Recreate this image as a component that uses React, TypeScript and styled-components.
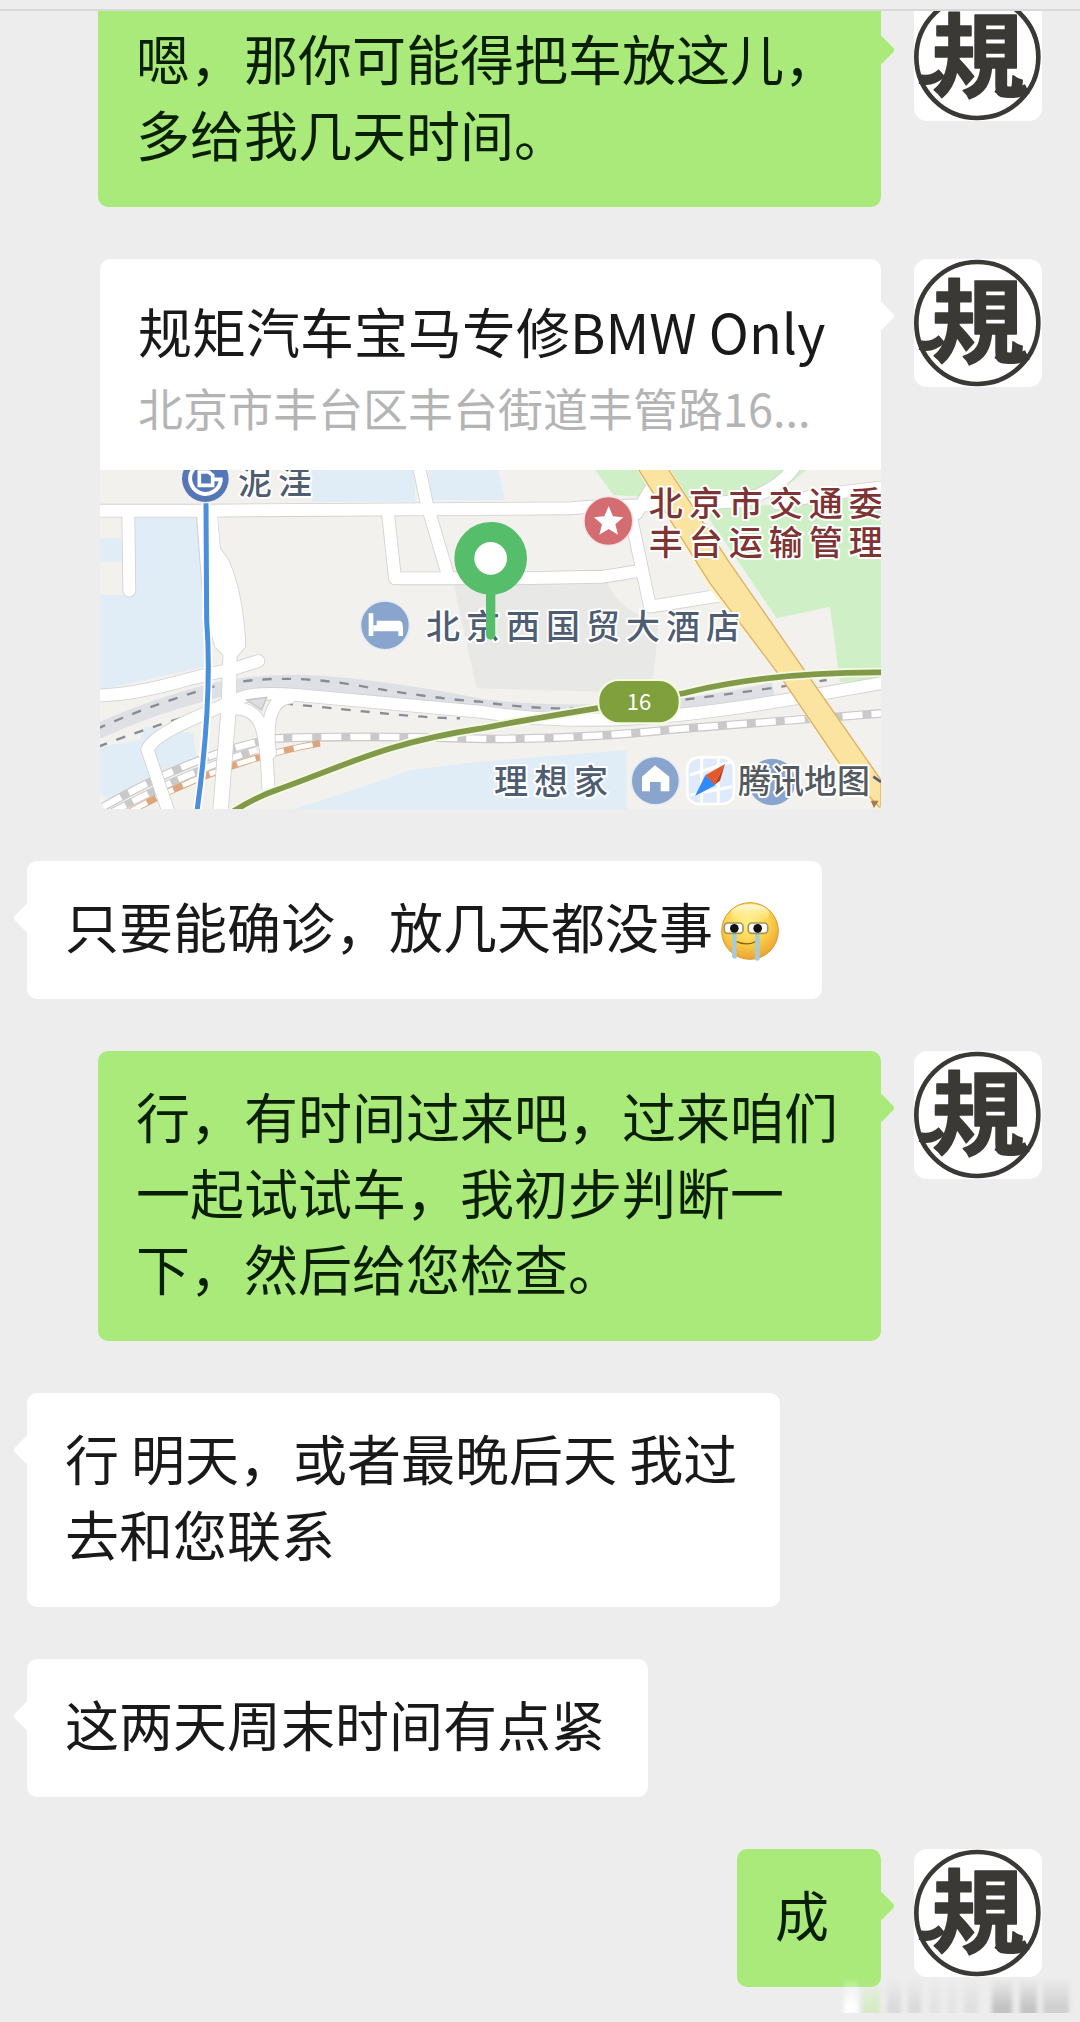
import React from "react";
import styled, { createGlobalStyle, css } from "styled-components";

const GREEN = "#a9ea7a";
const WHITE = "#ffffff";
const PAGE = "#ededed";

const GlobalStyle = createGlobalStyle`
  *, *::before, *::after { box-sizing: border-box; }
  body {
    margin: 0;
    background: ${PAGE};
    font-family: "Noto Sans CJK SC", "Noto Sans", sans-serif;
    color: #191919;
  }
  p, h2 { margin: 0; font-weight: 400; }
`;

const Screen = styled.main`
  display: flex;
  flex-direction: column;
  min-height: 100vh;
  background: ${PAGE};
  border-bottom: 2px solid #8c8c8c;
`;

const TopBar = styled.header`
  height: 11px;
  flex: none;
  background: ${PAGE};
  border-bottom: 2px solid #d8d8d8;
`;

const ChatView = styled.section`
  position: relative;
  flex: 1;
  overflow: hidden;
`;

const MessageList = styled.ol`
  list-style: none;
  margin: -18px 0 0;
  padding: 0 0 35px;
  display: flex;
  flex-direction: column;
  gap: 52px;
`;

const Row = styled.li<{ $mine?: boolean }>`
  display: flex;
  align-items: flex-start;
  gap: 33px;
  ${({ $mine }) =>
    $mine
      ? css`
          justify-content: flex-end;
          padding: 0 38px 0 98px;
        `
      : css`
          justify-content: flex-start;
          padding: 0 98px 0 27px;
        `}
`;

const tail = css<{ $mine?: boolean; $tone: string }>`
  &::after {
    content: "";
    position: absolute;
    top: 46px;
    ${({ $mine }) => ($mine ? "right: -10px;" : "left: -10px;")}
    width: 22px;
    height: 22px;
    border-radius: 4px;
    background: ${({ $tone }) => $tone};
    transform: rotate(45deg);
  }
`;

const Bubble = styled.div<{ $mine?: boolean; $tone: string }>`
  position: relative;
  min-width: 144px;
  padding: 27px 43px 35px 38px;
  border-radius: 10px;
  background: ${({ $tone }) => $tone};
  ${tail}
`;

const BubbleText = styled.p<{ $mine?: boolean }>`
  position: relative;
  z-index: 1;
  font-size: 54px;
  line-height: 76px;
  white-space: pre-line;
  color: ${({ $mine }) => ($mine ? "#0b1f05" : "#191919")};
`;

const Card = styled.article<{ $mine?: boolean; $tone: string }>`
  position: relative;
  flex: 1;
  min-width: 0;
  margin-left: 2px;
  border-radius: 10px;
  background: ${WHITE};
  ${tail}
`;

const CardHead = styled.div`
  padding: 34px 36px 28px 38px;
`;

const CardTitle = styled.h2`
  font-size: 54px;
  line-height: 76px;
  white-space: nowrap;
`;

const CardAddress = styled.p`
  padding-top: 4px;
  font-size: 45px;
  line-height: 69px;
  white-space: nowrap;
  color: #b4b4b4;
`;

const MapSvg = styled.svg`
  display: block;
  width: 100%;
  height: auto;
  border-radius: 0 0 4px 4px;

  text {
    font-family: "Noto Sans CJK SC", sans-serif;
    font-weight: 500;
    paint-order: stroke;
    stroke: #ffffff;
    stroke-width: 12px;
    stroke-linejoin: round;
  }
`;

const MapLabel = styled.text`
  font-size: 102px;
  letter-spacing: 18px;
`;

const MapBrand = styled.text`
  font-size: 99px;
`;

const RouteNumber = styled.text`
  && {
    font-size: 66px;
    font-weight: 400;
    stroke: none;
  }
`;

const AvatarSvg = styled.svg`
  flex: none;
  display: block;
  width: 128px;
  height: 128px;
  border-radius: 13px;
  background: ${WHITE};
`;

const Seal = styled.text`
  font-family: "Noto Sans CJK TC", "Noto Sans CJK SC", sans-serif;
  font-weight: 700;
  font-size: 276px;
  stroke: #3a3936;
  stroke-width: 5px;
  stroke-linejoin: round;
`;

const EmojiSvg = styled.svg`
  width: 58px;
  height: 60px;
  margin-left: 8px;
  vertical-align: -12px;
`;

const Watermark = styled.svg`
  position: absolute;
  right: 0;
  bottom: 8px;
  width: 240px;
  height: 36px;
`;

function Avatar() {
  return (
    <AvatarSvg viewBox="0 0 384 384" role="img" aria-label="規">
      <circle cx="190" cy="192" r="183" fill="none" stroke="#3a3936" strokeWidth="14" />
      <path d="M18 258 Q52 268 84 240" fill="none" stroke="#3a3936" strokeWidth="30" />
      <path d="M250 284 Q290 312 340 288" fill="none" stroke="#3a3936" strokeWidth="32" />
      <Seal x="192" y="290" textAnchor="middle" fill="#3a3936">
        規
      </Seal>
    </AvatarSvg>
  );
}

function CryingEmoji() {
  return (
    <EmojiSvg viewBox="0 0 174 180" role="img" aria-label="流泪">
      <defs>
        <radialGradient id="face" cx="45%" cy="32%" r="70%">
          <stop offset="0" stopColor="#fff08a" />
          <stop offset="0.55" stopColor="#fbd34a" />
          <stop offset="1" stopColor="#eba032" />
        </radialGradient>
        <linearGradient id="shine" x1="0" y1="0" x2="0" y2="1">
          <stop offset="0" stopColor="#fffbe0" />
          <stop offset="1" stopColor="#fff08a" stopOpacity="0" />
        </linearGradient>
      </defs>
      <circle cx="87" cy="90" r="85" fill="url(#face)" stroke="#d99a2a" strokeWidth="3" />
      <ellipse cx="87" cy="38" rx="58" ry="28" fill="url(#shine)" />
      <path d="M46 122 Q80 136 108 120" fill="none" stroke="#8a5a10" strokeWidth="4" />
      <path d="M33 96h14v76q-8 4-14-4z" fill="#a9cbd8" />
      <path d="M102 96h14v80q-8 6-14 0z" fill="#a9cbd8" />
      <rect x="10" y="66" width="56" height="31" rx="10" fill="#fff" stroke="#a29560" strokeWidth="5" />
      <rect x="82" y="66" width="58" height="31" rx="10" fill="#fff" stroke="#a29560" strokeWidth="5" />
      <circle cx="40" cy="82" r="13" fill="#111" />
      <circle cx="110" cy="82" r="13" fill="#111" />
    </EmojiSvg>
  );
}

const ROADS = [
  "M0 152H340L1440 145L1500 140L1740 134L1960 124Q2080 80 2120 10",
  "M115 165L118 392",
  "M985 10L1010 130L1075 350",
  "M893 150L915 355L1280 355L1540 350L1640 334",
  "M1625 180L1680 440L1900 405",
  "M1640 160L1680 90",
  "M2060 130Q2200 100 2400 80",
  "M15 707Q120 705 250 670T420 630L505 603",
  "M240 1070L172 868Q190 830 300 780T450 715Q490 695 620 705L1170 755Q1400 790 1640 775T2200 700L2400 665",
  "M430 745Q490 745 510 790T535 985",
  "M540 880Q520 720 600 712",
];

function LocationMap() {
  return (
    <MapSvg viewBox="30 30 2343 1017" role="img" aria-label="地图">
      <rect x="0" y="0" width="2400" height="1080" fill="#f2f1ed" />
      <path d="M130 170H318L345 400V620L30 690V405H100V170zM30 235H95V305H30zM665 30H975V125H665zM1015 30H1225L1245 120H1025z" fill="#e1edf6" />
      <path d="M30 860L150 840L165 800L310 820L320 900L60 1025L30 1000z" fill="#e1edf6" />
      <path d="M600 1050Q800 990 960 930L1170 905L1610 870V1050z" fill="#e1edf6" />
      <path d="M1090 370L1550 365Q1590 460 1705 480Q1700 600 1680 700L1160 685z" fill="#e8e8e7" />
      <path d="M1515 30H2150L2050 110H1660L1570 105z" fill="#cff0c6" />
      <path d="M1840 150L2373 110V665H2250L2220 440L2060 475z" fill="#cff0c6" />

      <path d="M10 820Q180 740 380 690Q560 650 800 680T1170 740Q1600 790 2050 690" fill="none" stroke="#dfe0e6" strokeWidth="46" />
      <path d="M20 807Q180 735 370 680Q560 635 800 676T1170 725Q1400 760 1640 735T2210 660" fill="none" stroke="#8b8c93" strokeWidth="7" strokeDasharray="28 30" />
      <path d="M25 860Q180 800 370 745M580 730Q780 750 900 762T1110 775" fill="none" stroke="#8b8c93" strokeWidth="7" strokeDasharray="28 30" />

      <g fill="none">
        <path d="M40 1040Q340 870 560 835Q800 825 1200 837Q1500 835 1750 808L2373 760" stroke="#c9c9c9" strokeWidth="26" />
        <path d="M40 1040Q340 870 560 835Q800 825 1200 837Q1500 835 1750 808L2373 760" stroke="#ffffff" strokeWidth="19" strokeDasharray="60 27" />
        <path d="M60 1060Q300 930 500 870" stroke="#c9c9c9" strokeWidth="24" />
        <path d="M60 1060Q300 930 500 870" stroke="#ffffff" strokeWidth="18" strokeDasharray="52 24" />
        <path d="M120 1055Q400 900 690 850" stroke="#dca57c" strokeWidth="20" />
        <path d="M120 1055Q400 900 690 850" stroke="#ffffff" strokeWidth="15" strokeDasharray="58 30" />
      </g>

      <g fill="none" stroke="#d2d1d0" strokeLinejoin="round" strokeLinecap="round">
        {ROADS.map((d) => (
          <path key={d} d={d} strokeWidth="41" />
        ))}
        <path d="M320 165L340 420L375 560L400 585L395 740L368 1070H412L438 740L440 590L466 560Q460 400 415 300L390 265L380 165z" strokeWidth="5" />
      </g>
      <g fill="none" stroke="#ffffff" strokeLinejoin="round" strokeLinecap="round">
        {ROADS.map((d) => (
          <path key={d} d={d} strokeWidth="36" />
        ))}
      </g>
      <path d="M320 150L340 420L375 560L400 585L395 740L368 1070H412L438 740L440 590L466 560Q460 400 415 300L390 265L380 150z" fill="#ffffff" />
      <path d="M470 720L530 712L515 750z" fill="#dcdde4" stroke="#c5c5c8" strokeWidth="4" />

      <path d="M1635 20H1735L2060 520L2345 920L2373 980V1047H2360L2245 920L2075 655L1860 390z" fill="#fff4d2" />
      <path d="M1640 20H1730L1920 310L2150 640L2345 920L2373 960V1047L2255 920L2075 655L1860 370z" fill="#fbe3a0" stroke="#dcb066" strokeWidth="4" />

      <path d="M348 130L350 480Q368 720 320 1060" fill="none" stroke="#ffffff" strokeWidth="26" />
      <path d="M348 130L350 480Q368 720 320 1060" fill="none" stroke="#4a8fdb" strokeWidth="15" />
      <path d="M420 1060Q500 1010 560 990C760 920 880 850 1170 806C1400 760 1700 720 1800 695Q2050 635 2380 637" fill="none" stroke="#f4fbe4" strokeWidth="28" />
      <path d="M420 1060Q500 1010 560 990C760 920 880 850 1170 806C1400 760 1700 720 1800 695Q2050 635 2380 637" fill="none" stroke="#82994a" strokeWidth="17" />

      <circle cx="346" cy="56" r="70" fill="#5577b8" />
      <path d="M392 62A46 46 0 1 1 380 24" fill="none" stroke="#ffffff" strokeWidth="12" />
      <path d="M328 36H356L368 46V76H328zM368 58H398" fill="none" stroke="#ffffff" strokeWidth="11" />
      <MapLabel x="444" y="102" fill="#4f5d6e">
        泥洼
      </MapLabel>

      <circle cx="1555" cy="183" r="73" fill="#d46d72" stroke="#f6e2e2" strokeWidth="4" />
      <path d="M1556 138L1569 169L1600 172L1576 193L1584 224L1556 207L1528 224L1536 193L1512 172L1543 169z" fill="#ffffff" />
      <MapLabel x="1676" y="168" fill="#7d3433">
        北京市交通委
      </MapLabel>
      <MapLabel x="1676" y="286" fill="#7d3433">
        丰台运输管理
      </MapLabel>

      <circle cx="885" cy="496" r="73" fill="#8aa5cd" stroke="#e3ebf4" strokeWidth="4" />
      <path d="M843 460V528M932 500V528" fill="none" stroke="#ffffff" strokeWidth="14" />
      <path d="M860 482H928Q938 484 938 496V514H850V496H860z" fill="#ffffff" />
      <MapLabel x="1008" y="538" fill="#4f5d73">
        北京西国贸大酒店
      </MapLabel>

      <path d="M1202 390V525" stroke="#56bd6a" strokeWidth="28" strokeLinecap="round" />
      <circle cx="1202" cy="295" r="79" fill="#ffffff" stroke="#56bd6a" strokeWidth="60" />

      <rect x="1525" y="660" width="244" height="130" rx="62" fill="#80a03e" stroke="#f4fbe4" strokeWidth="6" />
      <RouteNumber x="1647" y="751" textAnchor="middle" fill="#ffffff">
        16
      </RouteNumber>

      <MapLabel x="1212" y="1001" fill="#4f5d73">
        理想家
      </MapLabel>
      <circle cx="1696" cy="962" r="72" fill="#8aa5cd" stroke="#e3ebf4" strokeWidth="4" />
      <path d="M1695 916L1738 950V994H1712V966H1680V994H1656V950z" fill="#ffffff" />
      <circle cx="2046" cy="966" r="70" fill="#8aa5cd" />
      <rect x="1792" y="892" width="140" height="140" rx="34" fill="#dfeafa" stroke="#ffffff" strokeWidth="8" />
      <path d="M1800 945L1925 905M1800 1005L1925 980M1835 896V1028M1885 896V1028" stroke="#ffffff" strokeWidth="9" />
      <path d="M1905 912L1846 946L1872 976z" fill="#e2592b" />
      <path d="M1905 912L1872 976L1890 962z" fill="#b93f1c" />
      <path d="M1815 1008L1846 946L1876 976z" fill="#2f8bf5" />
      <path d="M2350 950L2373 966" stroke="#4f5d73" strokeWidth="8" />
      <path d="M2342 1022H2366L2352 1044z" fill="#a8794f" />
      <MapBrand x="1944" y="1000" fill="#555a60">
        腾讯地图
      </MapBrand>
    </MapSvg>
  );
}

type Message =
  | { kind: "text"; mine: boolean; text: string; crying?: boolean }
  | { kind: "location"; mine: boolean; title: string; address: string };

const MESSAGES: Message[] = [
  { kind: "text", mine: true, text: "嗯，那你可能得把车放这儿，\n多给我几天时间。" },
  {
    kind: "location",
    mine: true,
    title: "规矩汽车宝马专修BMW Only",
    address: "北京市丰台区丰台街道丰管路16...",
  },
  { kind: "text", mine: false, text: "只要能确诊，放几天都没事", crying: true },
  { kind: "text", mine: true, text: "行，有时间过来吧，过来咱们\n一起试试车，我初步判断一\n下，然后给您检查。" },
  { kind: "text", mine: false, text: "行 明天，或者最晚后天 我过\n去和您联系" },
  { kind: "text", mine: false, text: "这两天周末时间有点紧" },
  { kind: "text", mine: true, text: "成" },
];

const STRIPES = [
  [4, 14, 1, "#ffffff"],
  [22, 18, 0.6, "#c4ecab"],
  [47, 14, 0.6, "#cfcfcf"],
  [68, 13, 0.6, "#cfcfcf"],
  [90, 10, 0.4, "#d4d4d4"],
  [108, 8, 0.4, "#d4d4d4"],
  [124, 14, 0.5, "#d2d2d2"],
  [152, 20, 1, "#c2c2c2"],
  [180, 17, 1, "#c4c4c4"],
  [203, 26, 0.8, "#c8c8c8"],
] as const;

export default function App() {
  return (
    <>
      <GlobalStyle />
      <Screen>
        <TopBar />
        <ChatView>
          <MessageList>
            {MESSAGES.map((m, i) => (
              <Row key={i} $mine={m.mine}>
                {m.kind === "text" ? (
                  <Bubble $mine={m.mine} $tone={m.mine ? GREEN : WHITE}>
                    <BubbleText $mine={m.mine}>
                      {m.text}
                      {m.crying && <CryingEmoji />}
                    </BubbleText>
                  </Bubble>
                ) : (
                  <Card $mine={m.mine} $tone={WHITE}>
                    <CardHead>
                      <CardTitle>{m.title}</CardTitle>
                      <CardAddress>{m.address}</CardAddress>
                    </CardHead>
                    <LocationMap />
                  </Card>
                )}
                {m.mine && <Avatar />}
              </Row>
            ))}
          </MessageList>
          <Watermark viewBox="0 0 240 36" aria-hidden="true">
            <defs>
              <linearGradient id="fade" x1="0" y1="0" x2="0" y2="1">
                <stop offset="0" stopColor="#fff" stopOpacity="0" />
                <stop offset="0.8" stopColor="#fff" />
              </linearGradient>
              <mask id="fadeMask">
                <rect width="240" height="36" fill="url(#fade)" />
              </mask>
              <filter id="soft">
                <feGaussianBlur stdDeviation="2 0" />
              </filter>
            </defs>
            <g mask="url(#fadeMask)">
              <g filter="url(#soft)">
                {STRIPES.map(([x, w, o, c]) => (
                  <rect key={x} x={x} y="0" width={w} height="35" fill={c} opacity={o} />
                ))}
              </g>
            </g>
          </Watermark>
        </ChatView>
      </Screen>
    </>
  );
}
